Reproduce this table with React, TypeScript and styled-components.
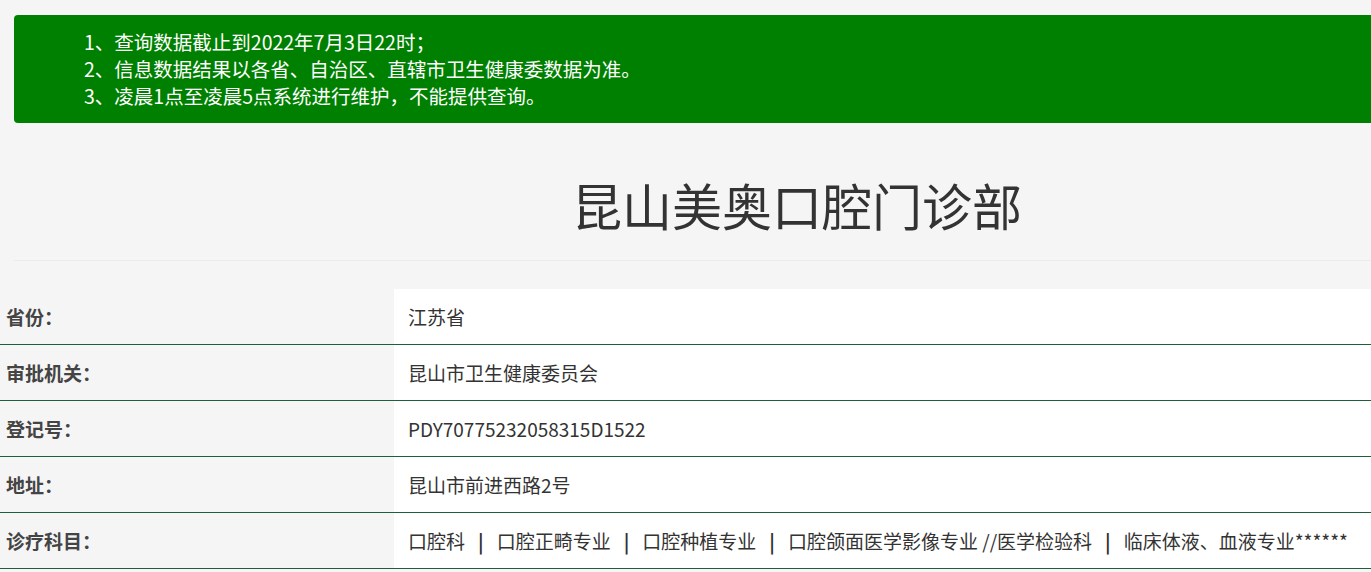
import React from "react";
import styled, { createGlobalStyle } from "styled-components";

const Global = createGlobalStyle`
  html, body { margin: 0; padding: 0; background: #f5f5f5; }
  body { font-family: "Noto Sans CJK SC", "Noto Sans", sans-serif; color: #333; overflow: hidden; }
  #root { width: 1371px; overflow: hidden; }
`;

const Page = styled.div`
  display: flex;
  flex-direction: column;
  padding-top: 15px;
`;

const Notice = styled.div`
  margin-left: 14px;
  margin-right: -40px;
  height: 108px;
  box-sizing: border-box;
  background: #008000;
  border-radius: 4px;
  padding: 13px 0 0 70px;
  color: #fff;
  font-size: 19.5px;
  line-height: 27px;
`;

const NoticeLine = styled.div`
  white-space: nowrap;
`;

const TitleArea = styled.div`
  margin-left: 14px;
  height: 138px;
  box-sizing: border-box;
  display: flex;
  align-items: center;
  padding: 24px 0 0 558px;
  border-bottom: 1px solid #ebebeb;
`;

const Title = styled.h1`
  margin: 0;
  font-size: 50px;
  font-weight: 400;
  color: #333;
  white-space: nowrap;
`;

const Table = styled.div`
  margin-top: 28px;
  display: flex;
  flex-direction: column;
`;

const Row = styled.div`
  display: grid;
  grid-template-columns: 394px 1fr;
  height: 56px;
  box-sizing: border-box;
  border-bottom: 1px solid #1d5e3c;
`;

const Label = styled.div`
  background: #f5f5f5;
  display: flex;
  align-items: center;
  padding: 0 0 1px 6px;
  font-size: 19px;
  font-weight: 700;
  color: #444;
`;

const Value = styled.div`
  background: #fff;
  display: flex;
  align-items: center;
  padding: 0 0 1px 14px;
  font-size: 19px;
  color: #333;
  white-space: nowrap;
`;

const Sep = styled.span`
  font-weight: 700;
  margin: 0 13px;
`;

const rows: [string, React.ReactNode][] = [
  ["省份：", "江苏省"],
  ["审批机关：", "昆山市卫生健康委员会"],
  ["登记号：", "PDY70775232058315D1522"],
  ["地址：", "昆山市前进西路2号"],
  [
    "诊疗科目：",
    <>
      口腔科<Sep>|</Sep>口腔正畸专业<Sep>|</Sep>口腔种植专业<Sep>|</Sep>口腔颌面医学影像专业 //医学检验科<Sep>|</Sep>临床体液、血液专业******
    </>,
  ],
];

export default function App() {
  return (
    <>
      <Global />
      <Page>
        <Notice>
          <NoticeLine>1、查询数据截止到2022年7月3日22时；</NoticeLine>
          <NoticeLine>2、信息数据结果以各省、自治区、直辖市卫生健康委数据为准。</NoticeLine>
          <NoticeLine>3、凌晨1点至凌晨5点系统进行维护，不能提供查询。</NoticeLine>
        </Notice>
        <TitleArea>
          <Title>昆山美奥口腔门诊部</Title>
        </TitleArea>
        <Table>
          {rows.map(([l, v], i) => (
            <Row key={i}>
              <Label>{l}</Label>
              <Value>{v}</Value>
            </Row>
          ))}
        </Table>
      </Page>
    </>
  );
}
